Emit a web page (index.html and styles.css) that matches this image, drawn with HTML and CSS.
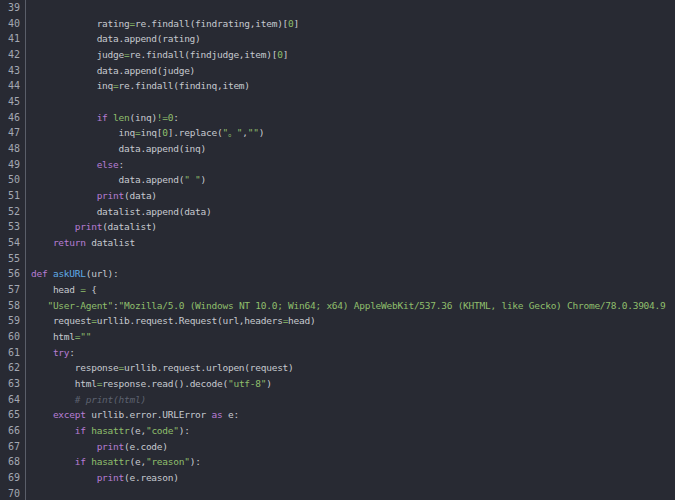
FILE: index.html
```html
<!DOCTYPE html>
<html>
<head>
<meta charset="utf-8">
<link rel="stylesheet" href="styles.css">
</head>
<body>
<div class="editor">
  <div class="gutter">
    <div>39</div><div>40</div><div>41</div><div>42</div><div>43</div><div>44</div><div>45</div><div>46</div><div>47</div><div>48</div><div>49</div><div>50</div><div>51</div><div>52</div><div>53</div><div>54</div><div>55</div><div>56</div><div>57</div><div>58</div><div>59</div><div>60</div><div>61</div><div>62</div><div>63</div><div>64</div><div>65</div><div>66</div><div>67</div><div>68</div><div>69</div><div>70</div>
  </div>
  <div class="code">
<div class="ln"> </div>
<div class="ln">            rating<span class="op">=</span>re.findall(findrating,item)[<span class="num">0</span>]</div>
<div class="ln">            data.append(rating)</div>
<div class="ln">            judge<span class="op">=</span>re.findall(findjudge,item)[<span class="num">0</span>]</div>
<div class="ln">            data.append(judge)</div>
<div class="ln">            inq<span class="op">=</span>re.findall(findinq,item)</div>
<div class="ln"> </div>
<div class="ln">            <span class="kw">if</span> <span class="bi">len</span>(inq)<span class="op">!=</span><span class="num">0</span>:</div>
<div class="ln">                inq<span class="op">=</span>inq[<span class="num">0</span>].replace(<span class="str">"<span class="cjk">。</span>"</span>,<span class="str">""</span>)</div>
<div class="ln">                data.append(inq)</div>
<div class="ln">            <span class="kw">else</span>:</div>
<div class="ln">                data.append(<span class="str">" "</span>)</div>
<div class="ln">            <span class="kw">print</span>(data)</div>
<div class="ln">            datalist.append(data)</div>
<div class="ln">        <span class="kw">print</span>(datalist)</div>
<div class="ln">    <span class="kw">return</span> datalist</div>
<div class="ln"> </div>
<div class="ln"><span class="kw">def</span> <span class="fn">askURL</span>(url):</div>
<div class="ln">    head <span class="op">=</span> {</div>
<div class="ln">   <span class="str">"User-Agent"</span>:<span class="str">"Mozilla/5.0 (Windows NT 10.0; Win64; x64) AppleWebKit/537.36 (KHTML, like Gecko) Chrome/78.0.3904.9</span></div>
<div class="ln">    request<span class="op">=</span>urllib.request.Request(url,headers<span class="op">=</span>head)</div>
<div class="ln">    html<span class="op">=</span><span class="str">""</span></div>
<div class="ln">    <span class="kw">try</span>:</div>
<div class="ln">        response<span class="op">=</span>urllib.request.urlopen(request)</div>
<div class="ln">        html<span class="op">=</span>response.read().decode(<span class="str">"utf-8"</span>)</div>
<div class="ln">        <span class="cm"># print(html)</span></div>
<div class="ln">    <span class="kw">except</span> urllib.error.URLError <span class="kw">as</span> e:</div>
<div class="ln">        <span class="kw">if</span> <span class="bi">hasattr</span>(e,<span class="str">"code"</span>):</div>
<div class="ln">            <span class="kw">print</span>(e.code)</div>
<div class="ln">        <span class="kw">if</span> <span class="bi">hasattr</span>(e,<span class="str">"reason"</span>):</div>
<div class="ln">            <span class="kw">print</span>(e.reason)</div>
<div class="ln"> </div>
  </div>
</div>
</body>
</html>
```
FILE: styles.css
```css
html, body {
  margin: 0;
  padding: 0;
  background: #282a33;
  height: 100%;
  overflow: hidden;
}
.editor {
  display: flex;
  height: 500px;
  background: #282a33;
  font-family: "DejaVu Sans Mono", "Liberation Mono", "Noto Sans CJK SC", monospace;
  font-size: 9.5px;
  letter-spacing: -0.25px;
  line-height: 15.68px;
}
.gutter {
  width: 25px;
  flex: none;
  border-right: 1px solid #5a5e69;
  color: #a3a8b2;
  text-align: right;
}
.gutter div {
  height: 15.68px;
  padding-right: 5px;
  font-size: 10px;
  letter-spacing: 0;
}
.code {
  padding-left: 5px;
  color: #c6c9cf;
  overflow: hidden;
  flex: 1;
}
.ln {
  height: 15.68px;
  white-space: pre;
}
.cjk {
  font-family: "Noto Sans CJK SC", sans-serif;
  font-size: 9px;
}
.kw { color: #b77dd4; }
.fn { color: #5fa9e6; }
.bi { color: #8fbf6c; }
.str { color: #8fbf6c; }
.num { color: #8fbf6c; }
.op { color: #8fbf6c; }
.cm { color: #5d6270; font-style: italic; }
```
